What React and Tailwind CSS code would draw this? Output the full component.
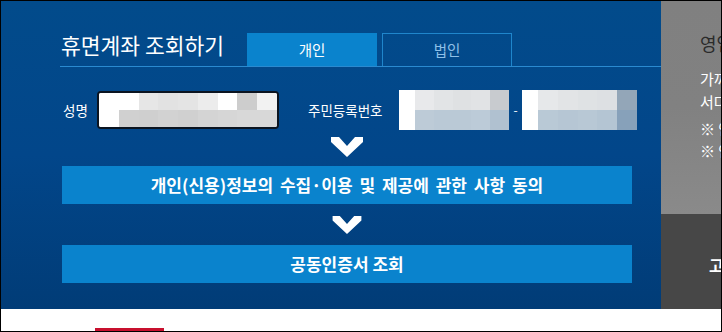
import React from "react";

const font = { fontFamily: '"Noto Sans CJK KR", "Noto Sans", sans-serif' };

const Chevron = ({ className }) => (
  <svg className={className} viewBox="0 0 32 20" width="32" height="20">
    <polygon points="0,0 8,0 16,9 24,0 32,0 32,5 16,20 0,5" fill="#ffffff" />
  </svg>
);

const BlurCells = ({ top, bottom }) => (
  <div className="flex flex-col w-full h-full">
    <div className="flex flex-1">
      {top.map((c, i) => (
        <div key={i} className="flex-1" style={{ background: c }} />
      ))}
    </div>
    <div className="flex flex-1">
      {bottom.map((c, i) => (
        <div key={i} className="flex-1" style={{ background: c }} />
      ))}
    </div>
  </div>
);

const App = () => {
  return (
    <div
      className="w-[722px] h-[332px] border border-black flex flex-col overflow-hidden bg-white"
      style={font}
    >
      <div className="flex h-[308px]">
        <div className="w-[660px] h-full bg-gradient-to-b from-[#024b8b] via-[#02468a] to-[#013c77] flex flex-col pl-[59px]">
          <div className="flex mt-[32px] h-[34px] border-b border-[#2a8ad0]">
            <div className="w-[187px] text-white text-[21.5px] leading-[24px] pl-[1px]">
              휴면계좌 조회하기
            </div>
            <div className="w-[130px] h-[33px] bg-[#0a83cd] text-white text-[14.5px] flex items-center justify-center">
              개인
            </div>
            <div className="w-[130px] h-[33px] ml-[5px] border border-b-0 border-[#1f86cc] text-[#8ec0e8] text-[14.5px] flex items-center justify-center">
              법인
            </div>
          </div>

          <div className="flex items-center mt-[23px] h-[40px] text-white text-[13.5px]">
            <div className="w-[37px] pl-[3px]">성명</div>
            <div className="w-[182px] h-[38px] rounded-[4px] border-2 border-[#0b1420] bg-white overflow-hidden">
              <BlurCells
                top={["#ffffff", "#ffffff", "#e6e6e6", "#e2e2e2", "#e4e4e4", "#ececec", "#ffffff", "#cdcdcd", "#f2f2f2"]}
                bottom={["#ffffff", "#d0d0d0", "#cfcfcf", "#d2d2d2", "#d0d0d0", "#d4d4d4", "#d6d6d6", "#d8d8d8", "#d8d8d8"]}
              />
            </div>
            <div className="w-[29px]" />
            <div className="w-[91px]">주민등록번호</div>
            <div className="w-[110px] h-[40px] flex bg-white">
              <div className="w-[16px] h-full bg-white" />
              <div className="flex-1">
                <BlurCells
                  top={["#e8e9eb", "#e2e4e6", "#dfe1e3", "#e1e3e5", "#c8cbcf"]}
                  bottom={["#bdcbd7", "#bac9d6", "#bac9d6", "#bccbd8", "#b0c1d0"]}
                />
              </div>
            </div>
            <div className="w-[13px] text-center text-[12px]">-</div>
            <div className="w-[115px] h-[40px] flex bg-white">
              <div className="w-[16px] h-full bg-white" />
              <div className="flex-1">
                <BlurCells
                  top={["#e6e8ea", "#e2e4e6", "#dfe2e4", "#dde0e3", "#93a6b8"]}
                  bottom={["#b9c9d6", "#b6c6d4", "#b8c8d5", "#b4c5d3", "#87a1ba"]}
                />
              </div>
            </div>
          </div>

          <div className="w-[570px] ml-[2px] h-[36px] flex items-center justify-center">
            <Chevron className="mt-[-3px]" />
          </div>
          <button className="w-[570px] ml-[2px] h-[38px] bg-[#0a83cd] text-white text-[17px] font-bold flex items-center justify-center [word-spacing:3px]">
            개인(신용)정보의 수집·이용 및 제공에 관한 사항 동의
          </button>
          <div className="w-[570px] ml-[2px] h-[41px] flex items-center justify-center">
            <Chevron className="h-[18px]" />
          </div>
          <button className="w-[570px] ml-[2px] h-[38px] bg-[#0a83cd] text-white text-[17px] font-bold flex items-center justify-center">
            공동인증서 조회
          </button>
        </div>

        <div className="flex-1 flex flex-col overflow-hidden whitespace-nowrap">
          <div className="h-[213px] bg-gradient-to-b from-[#808080] via-[#818181] to-[#8a8a8a] pl-[39px] pt-[30px]">
            <div className="text-[#2b2b2b] text-[18px] leading-[24px]">영업</div>
            <div className="text-white text-[15px] leading-[23px] mt-[12px]">가까</div>
            <div className="text-white text-[15px] leading-[23px]">서다</div>
            <div className="text-white text-[15px] leading-[22px] mt-[5px]">※ 안</div>
            <div className="text-white text-[15px] leading-[22px]">※ 안</div>
          </div>
          <div className="flex-1 bg-[#474747] pl-[48px] pt-[40px]">
            <div className="text-white text-[16px] font-bold leading-[22px]">고객</div>
          </div>
        </div>
      </div>
      <div className="flex-1 flex items-end">
        <div className="ml-[94px] w-[69px] h-[3px] bg-[#c8102e]" />
      </div>
    </div>
  );
};

export default App;
